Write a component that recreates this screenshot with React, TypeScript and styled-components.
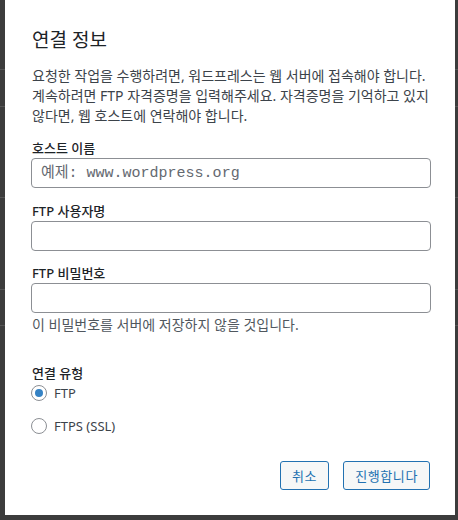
import styled, { createGlobalStyle } from 'styled-components';

const GlobalStyle = createGlobalStyle`
  html, body {
    margin: 0;
    padding: 0;
    background: #3c3c3c;
  }
  * {
    box-sizing: border-box;
  }
`;

const KR = `"Noto Sans", "Noto Sans CJK KR", sans-serif`;
const MONO = `"Liberation Mono", "DejaVu Sans Mono", "Noto Sans CJK KR", monospace`;

const Backdrop = styled.div`
  width: 458px;
  height: 520px;
  background-color: #3c3c3c;
  background-image: linear-gradient(#555 0 0), linear-gradient(#555 0 0),
    linear-gradient(#555 0 0), linear-gradient(#555 0 0),
    linear-gradient(#555 0 0);
  background-size: 100% 1px;
  background-repeat: no-repeat;
  background-position: 0 69px, 0 106px, 0 197px, 0 289px, 0 325px;
  padding-left: 5px;
  overflow: hidden;
`;

const Panel = styled.div`
  width: 450px;
  height: 515px;
  background: #fff;
  padding: 26px 24px 0 27px;
  font-family: ${KR};
  color: #3c434a;
  display: flex;
  flex-direction: column;
`;

const Title = styled.h2`
  margin: 0;
  font-size: 19px;
  line-height: 28px;
  font-weight: 400;
  color: #1d2327;
`;

const Intro = styled.p`
  margin: 12px 0 0;
  font-size: 14px;
  line-height: 20px;
  white-space: nowrap;
`;

const Field = styled.div<{ $gap: number }>`
  margin-top: ${(p) => p.$gap}px;
  display: flex;
  flex-direction: column;
`;

const Label = styled.label`
  font-size: 13px;
  line-height: 19px;
  font-weight: 500;
  color: #1d2327;
`;

const Input = styled.input`
  width: 400px;
  height: 30px;
  margin: 0 0 0 -1px;
  padding: 0 9px;
  border: 1px solid #8c8f94;
  border-radius: 4px;
  background: #fff;
  font-family: ${MONO};
  font-size: 13px;
  color: #2c3338;
  outline: none;
  &::placeholder {
    font-family: ${MONO};
    font-size: 15px;
    letter-spacing: 0;
    color: #646970;
  }
`;

const Help = styled.p`
  margin: 2px 0 0;
  font-size: 14px;
  line-height: 20px;
  color: #50575e;
`;

const Legend = styled.div`
  margin-top: 28px;
  font-size: 13px;
  line-height: 20px;
  font-weight: 500;
  color: #1d2327;
`;

const RadioRow = styled.label<{ $gap: number }>`
  margin-top: ${(p) => p.$gap}px;
  margin-left: -1px;
  display: flex;
  align-items: center;
  gap: 7px;
  height: 20px;
  font-size: 13px;
  color: #3c434a;
`;

const RadioDot = styled.span<{ $on?: boolean }>`
  width: 16px;
  height: 16px;
  border-radius: 50%;
  border: 1px solid #8c8f94;
  display: flex;
  align-items: center;
  justify-content: center;
  background: #fff;
  &::after {
    content: '';
    width: 8px;
    height: 8px;
    border-radius: 50%;
    background: ${(p) => (p.$on ? '#3582c4' : 'transparent')};
  }
`;

const Actions = styled.div`
  margin-top: 25px;
  display: flex;
  justify-content: flex-end;
  gap: 14px;
  padding-right: 1px;
`;

const Button = styled.button`
  height: 29px;
  padding: 0 11px;
  border: 1px solid #2271b1;
  border-radius: 3px;
  background: #f6f7f7;
  color: #2271b1;
  font-family: ${KR};
  font-size: 13px;
  letter-spacing: 0.6px;
  cursor: pointer;
`;

export default function App() {
  return (
    <>
      <GlobalStyle />
      <Backdrop>
        <Panel>
          <Title>연결 정보</Title>
          <Intro>
            요청한 작업을 수행하려면, 워드프레스는 웹 서버에 접속해야 합니다.
            <br />
            계속하려면 FTP 자격증명을 입력해주세요. 자격증명을 기억하고 있지
            <br />
            않다면, 웹 호스트에 연락해야 합니다.
          </Intro>
          <Field $gap={13}>
            <Label>호스트 이름</Label>
            <Input placeholder="예제: www.wordpress.org" />
          </Field>
          <Field $gap={14}>
            <Label>FTP 사용자명</Label>
            <Input />
          </Field>
          <Field $gap={13}>
            <Label>FTP 비밀번호</Label>
            <Input type="password" />
          </Field>
          <Help>이 비밀번호를 서버에 저장하지 않을 것입니다.</Help>
          <Legend>연결 유형</Legend>
          <RadioRow $gap={0}>
            <RadioDot $on />
            FTP
          </RadioRow>
          <RadioRow $gap={13}>
            <RadioDot />
            FTPS (SSL)
          </RadioRow>
          <Actions>
            <Button>취소</Button>
            <Button>진행합니다</Button>
          </Actions>
        </Panel>
      </Backdrop>
    </>
  );
}
